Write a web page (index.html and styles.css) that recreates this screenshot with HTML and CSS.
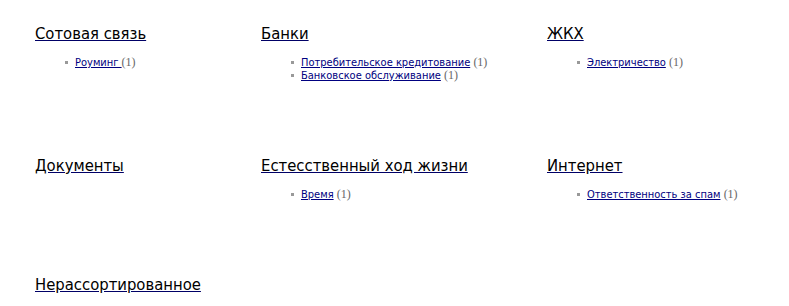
FILE: index.html
```html
<!DOCTYPE html>
<html lang="ru">
<head>
<meta charset="utf-8">
<link rel="stylesheet" href="styles.css">
</head>
<body>
<div class="grid">
  <section class="cat">
    <h3><a href="#">Сотовая связь</a></h3>
    <ul>
      <li><a href="#">Роуминг </a> <span class="cnt">(1)</span></li>
    </ul>
  </section>
  <section class="cat">
    <h3><a href="#">Банки</a></h3>
    <ul>
      <li><a href="#">Потребительское кредитование</a> <span class="cnt">(1)</span></li>
      <li><a href="#">Банковское обслуживание</a> <span class="cnt">(1)</span></li>
    </ul>
  </section>
  <section class="cat">
    <h3><a href="#">ЖКХ</a></h3>
    <ul>
      <li><a href="#">Электричество</a> <span class="cnt">(1)</span></li>
    </ul>
  </section>
  <section class="cat">
    <h3><a href="#">Документы</a></h3>
    <ul></ul>
  </section>
  <section class="cat">
    <h3><a href="#">Естесственный ход жизни</a></h3>
    <ul>
      <li><a href="#">Время</a> <span class="cnt">(1)</span></li>
    </ul>
  </section>
  <section class="cat">
    <h3><a href="#">Интернет</a></h3>
    <ul>
      <li><a href="#">Ответственность за спам</a> <span class="cnt">(1)</span></li>
    </ul>
  </section>
  <section class="cat last">
    <h3><a href="#">Нерассортированное</a></h3>
  </section>
</div>
</body>
</html>
```

FILE: styles.css
```css
html, body {
  margin: 0;
  padding: 0;
  background: #fff;
}
body {
  font-family: "DejaVu Sans Condensed", "DejaVu Sans", sans-serif;
  padding: 24px 0 0 35px;
}
.grid {
  display: grid;
  grid-template-columns: 226px 286px 1fr;
  align-items: start;
}
.cat {
  padding-bottom: 74px;
}
.cat.last {
  padding-bottom: 0;
}
.cat h3 {
  margin: 0;
  font-size: 16.5px;
  font-weight: normal;
  line-height: 20px;
}
.cat h3 a {
  color: #000;
  text-decoration: underline;
  text-decoration-color: #000066;
}
.cat ul {
  margin: 12px 0 0 0;
  padding: 0 0 0 40px;
  list-style: none;
  min-height: 12px;
}
.cat li {
  font-size: 11px;
  line-height: 12px;
  position: relative;
}
.cat li::before {
  content: "";
  position: absolute;
  left: -10px;
  top: 5px;
  width: 3px;
  height: 3px;
  background: #999;
}
.cat li a {
  color: #000080;
  text-decoration: underline;
}
.cnt {
  font-family: "Liberation Serif", serif;
  font-size: 12px;
  color: #666;
}
```
